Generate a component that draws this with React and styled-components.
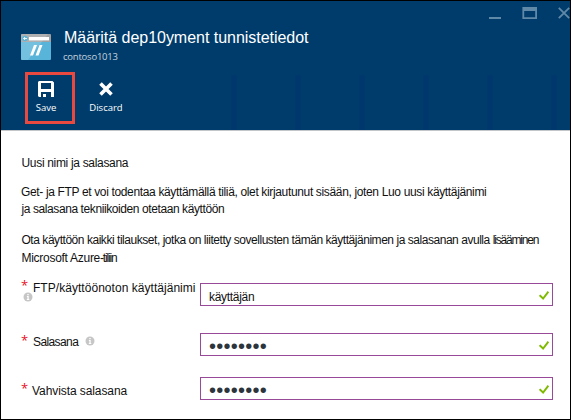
import React from "react";
import styled, { createGlobalStyle } from "styled-components";

const GlobalStyle = createGlobalStyle`
  *, *::before, *::after { box-sizing: border-box; }
  body { margin: 0; background: #fff; }
`;

const Blade = styled.main`
  width: 571px;
  height: 420px;
  border: 1px solid #000;
  background: #fff;
  color: #111;
  font: 12px/18px "Liberation Sans", Arial, sans-serif;
  overflow: hidden;
`;

const Header = styled.header`
  display: flex;
  flex-direction: column;
  height: 130px;
  background: #003c6b;
  border-bottom: 1px solid #c3c6c9;
`;

const WindowControls = styled.div`
  display: flex;
  justify-content: flex-end;
  height: 24px;
  padding-top: 6px;
  gap: 21px;
  color: #6089a8;

  svg { display: block; flex: none; }
`;

const Heading = styled.div`
  display: flex;
  height: 46px;
  padding: 9px 0 0 20px;

  & > svg { display: block; flex: none; }
`;

const Titles = styled.div`
  display: flex;
  flex-direction: column;
  margin: -6px 0 0 12px;
`;

const Title = styled.h1`
  margin: 0 0 0 1px;
  color: #fff;
  font-size: 16px;
  font-weight: 400;
  line-height: 20px;
  letter-spacing: -0.03px;
  white-space: nowrap;
`;

const Subtitle = styled.span`
  margin-top: 2px;
  color: #c5d3df;
  font: 9.5px/13px "Open Sans", sans-serif;
  letter-spacing: -0.22px;
`;

const Toolbar = styled.div`
  display: flex;
  align-items: flex-start;
  height: 59px;
  padding: 1px 0 0 24px;
`;

const Command = styled.button`
  display: flex;
  flex-direction: column;
  align-items: center;
  width: ${(p) => p.$width}px;
  height: 52px;
  margin: 0;
  padding: 6px ${(p) => p.$inset}px 0 0;
  border: 3px solid ${(p) => (p.$highlighted ? "#e9493f" : "transparent")};
  background: none;
  color: #fff;
  font: 9.5px/13px "Open Sans", sans-serif;

  svg { display: block; flex: none; }
  span { margin-top: 4px; }
`;

const Slots = styled.div`
  display: flex;
  align-self: flex-end;
  gap: 58px;
  margin-left: 94px;
`;

const Slot = styled.i`
  width: 6px;
  height: 55px;
  background: #00386d;
`;

const Content = styled.section`
  padding: 23px 17px 0 20px;
`;

const Line = styled.div`
  height: 18px;
  margin: ${(p) => p.$gap || 0}px 0 0 ${(p) => p.$indent || 0}px;
  letter-spacing: ${(p) => p.$spacing}px;
  white-space: nowrap;
`;

const Tight = styled.span`
  letter-spacing: -1.18px;
`;

const Field = styled.div`
  display: grid;
  grid-template-columns: 179px 353px;
  height: 23px;
  margin-top: ${(p) => p.$gap}px;
`;

const Label = styled.label`
  display: flex;
  flex-wrap: wrap;
  align-content: flex-start;
  height: 28px;
  margin-top: ${(p) => p.$shift}px;

  & > svg { display: block; flex: none; margin: ${(p) => p.$iconMargin || 0}; }
`;

const Star = styled.span`
  width: ${(p) => p.$width}px;
  height: 18px;
  color: #e81123;
  font: 13px/${(p) => p.$line}px "Open Sans", sans-serif;
`;

const LabelText = styled.span`
  letter-spacing: ${(p) => p.$spacing}px;
  white-space: nowrap;
`;

const InputBox = styled.div`
  display: flex;
  justify-content: space-between;
  height: 23px;
  padding: 0 3px 0 8px;
  border: 1px solid #984a98;

  svg { display: block; margin-top: 7px; }
`;

const Value = styled.span`
  padding-top: 4px;
  letter-spacing: -0.3px;
`;

const Secret = styled.span`
  color: #2c343c;
  font-size: 20px;
  line-height: 23px;
  padding-top: 1px;
  letter-spacing: 0.25px;
`;

const SiteIcon = () => (
  <svg width="30" height="26" viewBox="0 0 30 26">
    <path fill="#59b4d9" d="M0 7h30v18a1 1 0 0 1-1 1H1a1 1 0 0 1-1-1z" />
    <path fill="#a0a1a2" d="M1 0h28a1 1 0 0 1 1 1v7H0V1a1 1 0 0 1 1-1z" />
    <path fill="#fff" fillOpacity=".16" d="M0 0h27L7 26H0z" />
    <path fill="#fff" d="M8 3h20v3.4H8z" />
    <circle cx="4" cy="4.5" r="2.8" fill="#59b4d9" />
    <path fill="none" stroke="#fff" strokeWidth=".9" d="M6 4.5H2.6M4.1 3 2.6 4.5 4.1 6" />
    <path fill="#fff" d="M13 11h3l-4 10.5H9zM18.5 11h3l-4 10.5h-3z" />
  </svg>
);

const SaveIcon = () => (
  <svg width="16" height="16" viewBox="0 0 16 16">
    <path
      fill="#fff"
      fillRule="evenodd"
      d="M1 0h13.5L16 1.5V16H13V11H3v5H1l-1-1V1zM3 2v6h10V2zM5 13h3v3H5z"
    />
  </svg>
);

const DiscardIcon = () => (
  <svg width="14" height="16" viewBox="0 0 14 16">
    <path fill="none" stroke="#fff" strokeWidth="3.6" d="M1.5 2.5l11 11M12.5 2.5l-11 11" />
  </svg>
);

const MinimizeIcon = () => (
  <svg width="12" height="12" viewBox="0 0 12 12">
    <path fill="currentColor" d="M0 10h12v2H0z" />
  </svg>
);

const MaximizeIcon = () => (
  <svg width="15" height="12" viewBox="0 0 15 12">
    <path fill="currentColor" fillRule="evenodd" d="M.4 0H15v12H.4zM2.2 4v6.2h11V4z" />
  </svg>
);

const CloseIcon = () => (
  <svg width="12" height="12" viewBox="0 0 12 12">
    <path fill="none" stroke="currentColor" strokeWidth="1.8" d="M.8.8l10.4 10.4M11.2.8.8 11.2" />
  </svg>
);

const InfoIcon = () => (
  <svg width="10" height="10" viewBox="0 0 10 10">
    <circle cx="5" cy="5" r="4.5" fill="#c6c6c6" />
    <path fill="#fff" d="M4.3 2h1.4v1.3H4.3zM3.9 4.1h1.8v3h.6v.8H3.8v-.8h.6V4.9h-.5z" />
  </svg>
);

const CheckIcon = () => (
  <svg width="10" height="9" viewBox="0 0 10 9">
    <path fill="none" stroke="#7fba00" strokeWidth="1.9" d="M.6 4.2 4.1 7.5 9.4.7" />
  </svg>
);

export default function App() {
  return (
    <>
      <GlobalStyle />
      <Blade>
        <Header>
          <WindowControls>
            <MinimizeIcon />
            <MaximizeIcon />
            <CloseIcon />
          </WindowControls>
          <Heading>
            <SiteIcon />
            <Titles>
              <Title>Määritä dep10yment tunnistetiedot</Title>
              <Subtitle>contoso1013</Subtitle>
            </Titles>
          </Heading>
          <Toolbar>
            <Command $highlighted $width={50} $inset={8}>
              <SaveIcon />
              <span>Save</span>
            </Command>
            <Command $width={62} $inset={0}>
              <DiscardIcon />
              <span>Discard</span>
            </Command>
            <Slots>
              {[0, 1, 2, 3, 4, 5].map((n) => (
                <Slot key={n} />
              ))}
            </Slots>
          </Toolbar>
        </Header>

        <Content>
          <Line $spacing={-0.32} $indent={0.5}>Uusi nimi ja salasana</Line>
          <Line $spacing={-0.35} $gap={11}>
            Get- ja FTP et voi todentaa käyttämällä tiliä, olet kirjautunut sisään, joten Luo uusi käyttäjänimi
          </Line>
          <Line $spacing={-0.41} $gap={-1} $indent={0.5}>
            ja salasana tekniikoiden otetaan käyttöön
          </Line>
          <Line $spacing={-0.46} $gap={13} $indent={0.5}>
            Ota käyttöön kaikki tilaukset, jotka on liitetty sovellusten tämän käyttäjänimen ja salasanan avulla{" "}
            <Tight>lisääminen</Tight>
          </Line>
          <Line $spacing={-0.28} $indent={0.5}>
            Microsoft Azure<Tight>-tiliin</Tight>
          </Line>

          <Field $gap={16}>
            <Label $shift={-4} $iconMargin="-5px 0 0 2px">
              <Star $width={12} $line={12}>*</Star>
              <LabelText $spacing={0.04}>FTP/käyttöönoton käyttäjänimi</LabelText>
              <InfoIcon />
            </Label>
            <InputBox>
              <Value>käyttäjän</Value>
              <CheckIcon />
            </InputBox>
          </Field>
          <Field $gap={27}>
            <Label $shift={0} $iconMargin="3px 0 0 7px">
              <Star $width={12} $line={15}>*</Star>
              <LabelText $spacing={-0.6}>Salasana</LabelText>
              <InfoIcon />
            </Label>
            <InputBox>
              <Secret>••••••••</Secret>
              <CheckIcon />
            </InputBox>
          </Field>
          <Field $gap={21}>
            <Label $shift={5}>
              <Star $width={11} $line={13}>*</Star>
              <LabelText $spacing={-0.08}>Vahvista salasana</LabelText>
            </Label>
            <InputBox>
              <Secret>••••••••</Secret>
              <CheckIcon />
            </InputBox>
          </Field>
        </Content>
      </Blade>
    </>
  );
}
